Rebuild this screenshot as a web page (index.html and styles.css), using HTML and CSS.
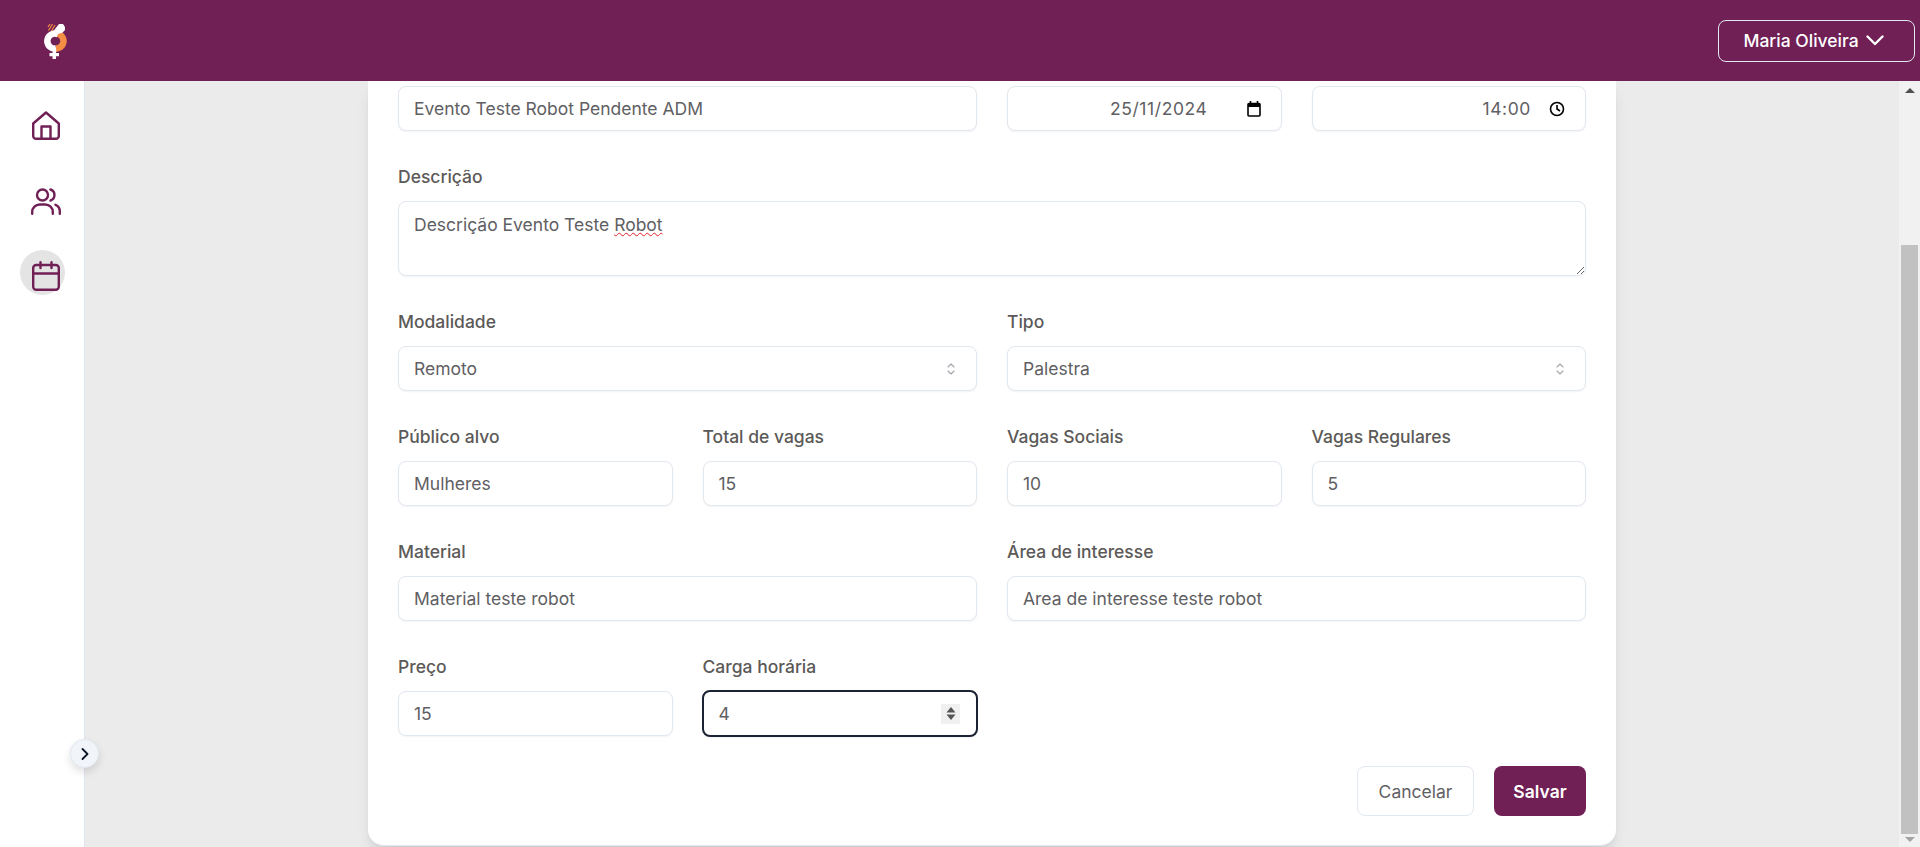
FILE: index.html
```html
<!DOCTYPE html>
<html lang="pt-BR">
<head>
    <meta charset="utf-8">
    <title>Editar evento</title>
    <link rel="stylesheet" href="styles.css">
</head>
<body>
    <!-- topo -->
    <header class="topbar">
        <svg class="logo" width="24" height="37" viewBox="0 0 24 37" fill="none">
            <path d="M13 10.500A7.500 7.500 0 0 1 13 25.500" stroke="#f58e45" stroke-width="6.500"/>
            <path d="M15 11.300A7.500 7.500 0 1 0 13 25.500" stroke="#fff" stroke-width="6.500"/>
            <path d="M9 11l3-5 4-5h4l2 3v3l-3 3-5 1-3 2z" fill="#fff"/>
            <path d="M5.500 7.500L9.500 1M8.500 8l3.500-6M5 4l2-3" stroke="#f58e45" stroke-width="1.200"/>
            <path d="M9.500 27h3.500v3h3v3.300h-3V36H9.500v-2.700h-3V30h3z" fill="#fff"/>
        </svg>
        <button class="user-btn">
            Maria Oliveira
            <svg width="18" height="11" viewBox="0 0 18 11" fill="none" stroke="#fff" stroke-width="2.400" stroke-linecap="round" stroke-linejoin="round"><path d="M1.500 1.500L9 9l7.500-7.500"/></svg>
        </button>
    </header>

    <div class="layout">
        <!-- menu lateral -->
        <nav class="sidebar">
            <a class="nav-item">
                <svg width="28" height="29" viewBox="0 0 28 29" fill="none" stroke="#702055" stroke-width="2.400" stroke-linejoin="round"><path d="M1.200 12.500L14 1.500l12.800 11V25a2.800 2.800 0 0 1-2.800 2.800H4A2.800 2.800 0 0 1 1.200 25z"/><path d="M9.500 27.800V15.500h9v12.300"/></svg>
            </a>
            <a class="nav-item">
                <svg width="30" height="27" viewBox="0 0 30 27" fill="none" stroke="#702055" stroke-width="2.400" stroke-linecap="round"><circle cx="11.500" cy="7" r="5.500"/><path d="M1.200 25.800V24a7.500 7.500 0 0 1 7.500-7.500h5.600a7.500 7.500 0 0 1 7.500 7.500v1.800"/><path d="M19.500 1.500a5.800 5.800 0 0 1 0 11"/><path d="M24.500 16.800a7 7 0 0 1 4.300 6.200v2.800"/></svg>
            </a>
            <a class="nav-item active">
                <svg width="28" height="30" viewBox="0 0 28 30" fill="none" stroke="#702055" stroke-width="2.400" stroke-linecap="round"><rect x="1.200" y="4" width="25.600" height="24.800" rx="3"/><path d="M1.200 12.500h25.600M8.500 1.200v5.800M19.500 1.200v5.800"/></svg>
            </a>
            <button class="collapse-btn">
                <svg width="8" height="12" viewBox="0 0 8 12" fill="none" stroke="#0f172a" stroke-width="1.800" stroke-linecap="round" stroke-linejoin="round"><path d="M1.500 1l5 5-5 5"/></svg>
            </button>
        </nav>

        <main class="content">
            <form class="card">
                <div class="form-grid">
                    <div class="field span-2">
                        <input class="input" type="text" value="Evento Teste Robot Pendente ADM">
                    </div>
                    <div class="field">
                        <div class="input align-end">
                            <span class="date-value">25/11/2024</span>
                            <svg class="date-icon" width="14" height="16" viewBox="0 0 14 16" fill="none" stroke="#000" stroke-width="1.600"><rect x="1" y="2.500" width="12" height="12.500" rx="1"/><path d="M1 4.500h12" stroke-width="3"/><path d="M3.500 0v2M10.500 0v2"/></svg>
                        </div>
                    </div>
                    <div class="field">
                        <div class="input align-end">
                            <span class="date-value">14:00</span>
                            <svg class="time-icon" width="16" height="16" viewBox="0 0 16 16" fill="none" stroke="#000" stroke-width="1.600"><circle cx="8" cy="8" r="6.500"/><path d="M8 4v4l3 2"/></svg>
                        </div>
                    </div>

                    <div class="field span-4">
                        <label>Descrição</label>
                        <div class="input textarea">Descrição Evento Teste <span class="misspelled">Robot</span></div>
                    </div>

                    <div class="field span-2">
                        <label>Modalidade</label>
                        <div class="input select">
                            Remoto
                            <svg width="10" height="12" viewBox="0 0 10 12" fill="none" stroke="#a0a4ab" stroke-width="1.100" stroke-linecap="round" stroke-linejoin="round"><path d="M2 4l3-3 3 3M2 8l3 3 3-3"/></svg>
                        </div>
                    </div>
                    <div class="field span-2">
                        <label>Tipo</label>
                        <div class="input select">
                            Palestra
                            <svg width="10" height="12" viewBox="0 0 10 12" fill="none" stroke="#a0a4ab" stroke-width="1.100" stroke-linecap="round" stroke-linejoin="round"><path d="M2 4l3-3 3 3M2 8l3 3 3-3"/></svg>
                        </div>
                    </div>

                    <div class="field">
                        <label>Público alvo</label>
                        <input class="input" type="text" value="Mulheres">
                    </div>
                    <div class="field">
                        <label>Total de vagas</label>
                        <input class="input" type="text" value="15">
                    </div>
                    <div class="field">
                        <label>Vagas Sociais</label>
                        <input class="input" type="text" value="10">
                    </div>
                    <div class="field">
                        <label>Vagas Regulares</label>
                        <input class="input" type="text" value="5">
                    </div>

                    <div class="field span-2">
                        <label>Material</label>
                        <input class="input" type="text" value="Material teste robot">
                    </div>
                    <div class="field span-2">
                        <label>Área de interesse</label>
                        <input class="input" type="text" value="Area de interesse teste robot">
                    </div>

                    <div class="field">
                        <label>Preço</label>
                        <input class="input" type="text" value="15">
                    </div>
                    <div class="field">
                        <label>Carga horária</label>
                        <div class="input number focused">
                            4
                            <span class="stepper">
                                <svg width="10" height="15" viewBox="0 0 10 15" fill="#555"><path d="M5 1l4.500 5.500h-9zM5 14L.5 8.500h9z"/></svg>
                            </span>
                        </div>
                    </div>
                </div>

                <div class="actions">
                    <button type="button" class="btn btn-cancel">Cancelar</button>
                    <button type="button" class="btn btn-save">Salvar</button>
                </div>
            </form>
        </main>

        <!-- barra de rolagem -->
        <div class="scrollbar">
            <span class="arrow-up"></span>
            <div class="scroll-space"><div class="scroll-thumb"></div></div>
            <span class="arrow-down"></span>
        </div>
    </div>
</body>
</html>
```

FILE: styles.css
```css
* {
    box-sizing: border-box;
}

html, body {
    height: 100%;
}

body {
    margin: 0;
    display: flex;
    flex-direction: column;
    overflow: hidden;
    font-family: Inter, "Liberation Sans", sans-serif;
    font-size: 17.5px;
    color: #5f6063;
    background: #ebebeb;
}

/* topo */
.topbar {
    flex: 0 0 81px;
    display: flex;
    align-items: center;
    justify-content: space-between;
    padding: 0 5px 0 43px;
    background: #702055;
}

.logo {
    margin-top: 1px;
}

.user-btn {
    display: flex;
    align-items: center;
    justify-content: center;
    gap: 7px;
    width: 197px;
    height: 42px;
    padding: 0 6px 0 0;
    border: 1px solid #e2e8f0;
    border-radius: 8px;
    background: transparent;
    color: #fff;
    font: 500 17.5px Inter, "Liberation Sans", sans-serif;
}

/* estrutura */
.layout {
    flex: 1;
    display: flex;
    min-height: 0;
}

.sidebar {
    position: relative;
    flex: 0 0 85px;
    display: flex;
    flex-direction: column;
    align-items: flex-start;
    gap: 31px;
    padding: 22px 0 0 20px;
    background: #fff;
    border-right: 1px solid #dfe5ec;
}

.nav-item {
    display: flex;
    align-items: center;
    justify-content: center;
    width: 45px;
    height: 45px;
    border-radius: 50%;
}

.nav-item svg {
    margin-left: 6px;
}

.nav-item.active {
    margin-top: -5px;
    background: #e4e4e4;
}

.nav-item.active svg {
    margin-top: 7px;
}

.collapse-btn {
    position: absolute;
    top: 658px;
    left: 70px;
    display: flex;
    align-items: center;
    justify-content: center;
    width: 29px;
    height: 29px;
    padding: 0;
    border: 1px solid #e2e8f0;
    border-radius: 50%;
    background: #f1f5f9;
    box-shadow: 0 4px 8px rgba(0, 0, 0, 0.12);
}

.content {
    flex: 1;
    padding-left: 283px;
    overflow: hidden;
}

.card {
    width: 1248px;
    height: 765px;
    padding: 5px 30px 30px;
    background: #fff;
    border-bottom: 1px solid #e2e8f0;
    border-radius: 0 0 16px 16px;
    box-shadow: 0 10px 15px -3px rgba(0, 0, 0, 0.1), 0 4px 6px -4px rgba(0, 0, 0, 0.1);
}

/* formulario */
.form-grid {
    display: grid;
    grid-template-columns: repeat(4, 1fr);
    column-gap: 30px;
    row-gap: 34px;
}

.field {
    display: flex;
    flex-direction: column;
    gap: 12px;
    min-width: 0;
}

.field label {
    font-size: 17.5px;
    font-weight: 500;
    line-height: 24px;
    color: #5c5a58;
}

.span-2 {
    grid-column: span 2;
}

.span-4 {
    grid-column: span 4;
}

.input {
    display: flex;
    align-items: center;
    width: 100%;
    height: 45px;
    padding: 0 15px;
    border: 1px solid #e2e8f0;
    border-radius: 8px;
    background: #fff;
    box-shadow: 0 1px 2px rgba(0, 0, 0, 0.05);
    color: #5f6063;
    font: 400 17.5px Inter, "Liberation Sans", sans-serif;
    outline: none;
}

.align-end {
    justify-content: flex-end;
}

.date-value {
    letter-spacing: 0.6px;
}

.date-icon {
    margin-left: 39px;
    margin-right: 5px;
}

.time-icon {
    margin-left: 18px;
    margin-right: 5px;
}

.textarea {
    display: block;
    height: 75px;
    padding-top: 11px;
    line-height: 24px;
    overflow: auto;
    resize: vertical;
}

.misspelled {
    text-decoration: underline wavy #e0202a 1px;
}

.select {
    justify-content: space-between;
    padding-right: 20px;
}

.number {
    justify-content: space-between;
    padding-right: 16px;
}

.focused {
    width: calc(100% + 2px);
    height: 47px;
    margin: -1px -1px;
    border: 2px solid #1a2233;
    padding-left: 15px;
}

.stepper {
    display: flex;
    align-items: center;
    justify-content: center;
    width: 19px;
    height: 20px;
    background: #f0f0f0;
}

.actions {
    display: flex;
    justify-content: flex-end;
    gap: 20px;
    margin-top: 30px;
}

.btn {
    height: 50px;
    border-radius: 8px;
    font: 500 17.5px Inter, "Liberation Sans", sans-serif;
}

.btn-cancel {
    width: 117px;
    border: 1px solid #e2e8f0;
    background: #fff;
    color: #5f6063;
    font-weight: 400;
}

.btn-save {
    width: 92px;
    border: 0;
    background: #702055;
    color: #fff;
    font-weight: 600;
}

/* barra de rolagem */
.scrollbar {
    flex: 0 0 21px;
    display: flex;
    flex-direction: column;
    align-items: center;
    padding: 7px 0 5px;
    background: #f1f1f1;
}

.arrow-up, .arrow-down {
    width: 0;
    height: 0;
    border-left: 5px solid transparent;
    border-right: 5px solid transparent;
}

.arrow-up {
    border-bottom: 5px solid #505050;
}

.arrow-down {
    border-top: 5px solid #a3a3a3;
}

.scroll-space {
    flex: 1;
    width: 17px;
    padding-top: 152px;
    padding-bottom: 3px;
    margin: 0 0 0 -1px;
}

.scroll-thumb {
    height: 100%;
    background: #c1c1c1;
}
```
